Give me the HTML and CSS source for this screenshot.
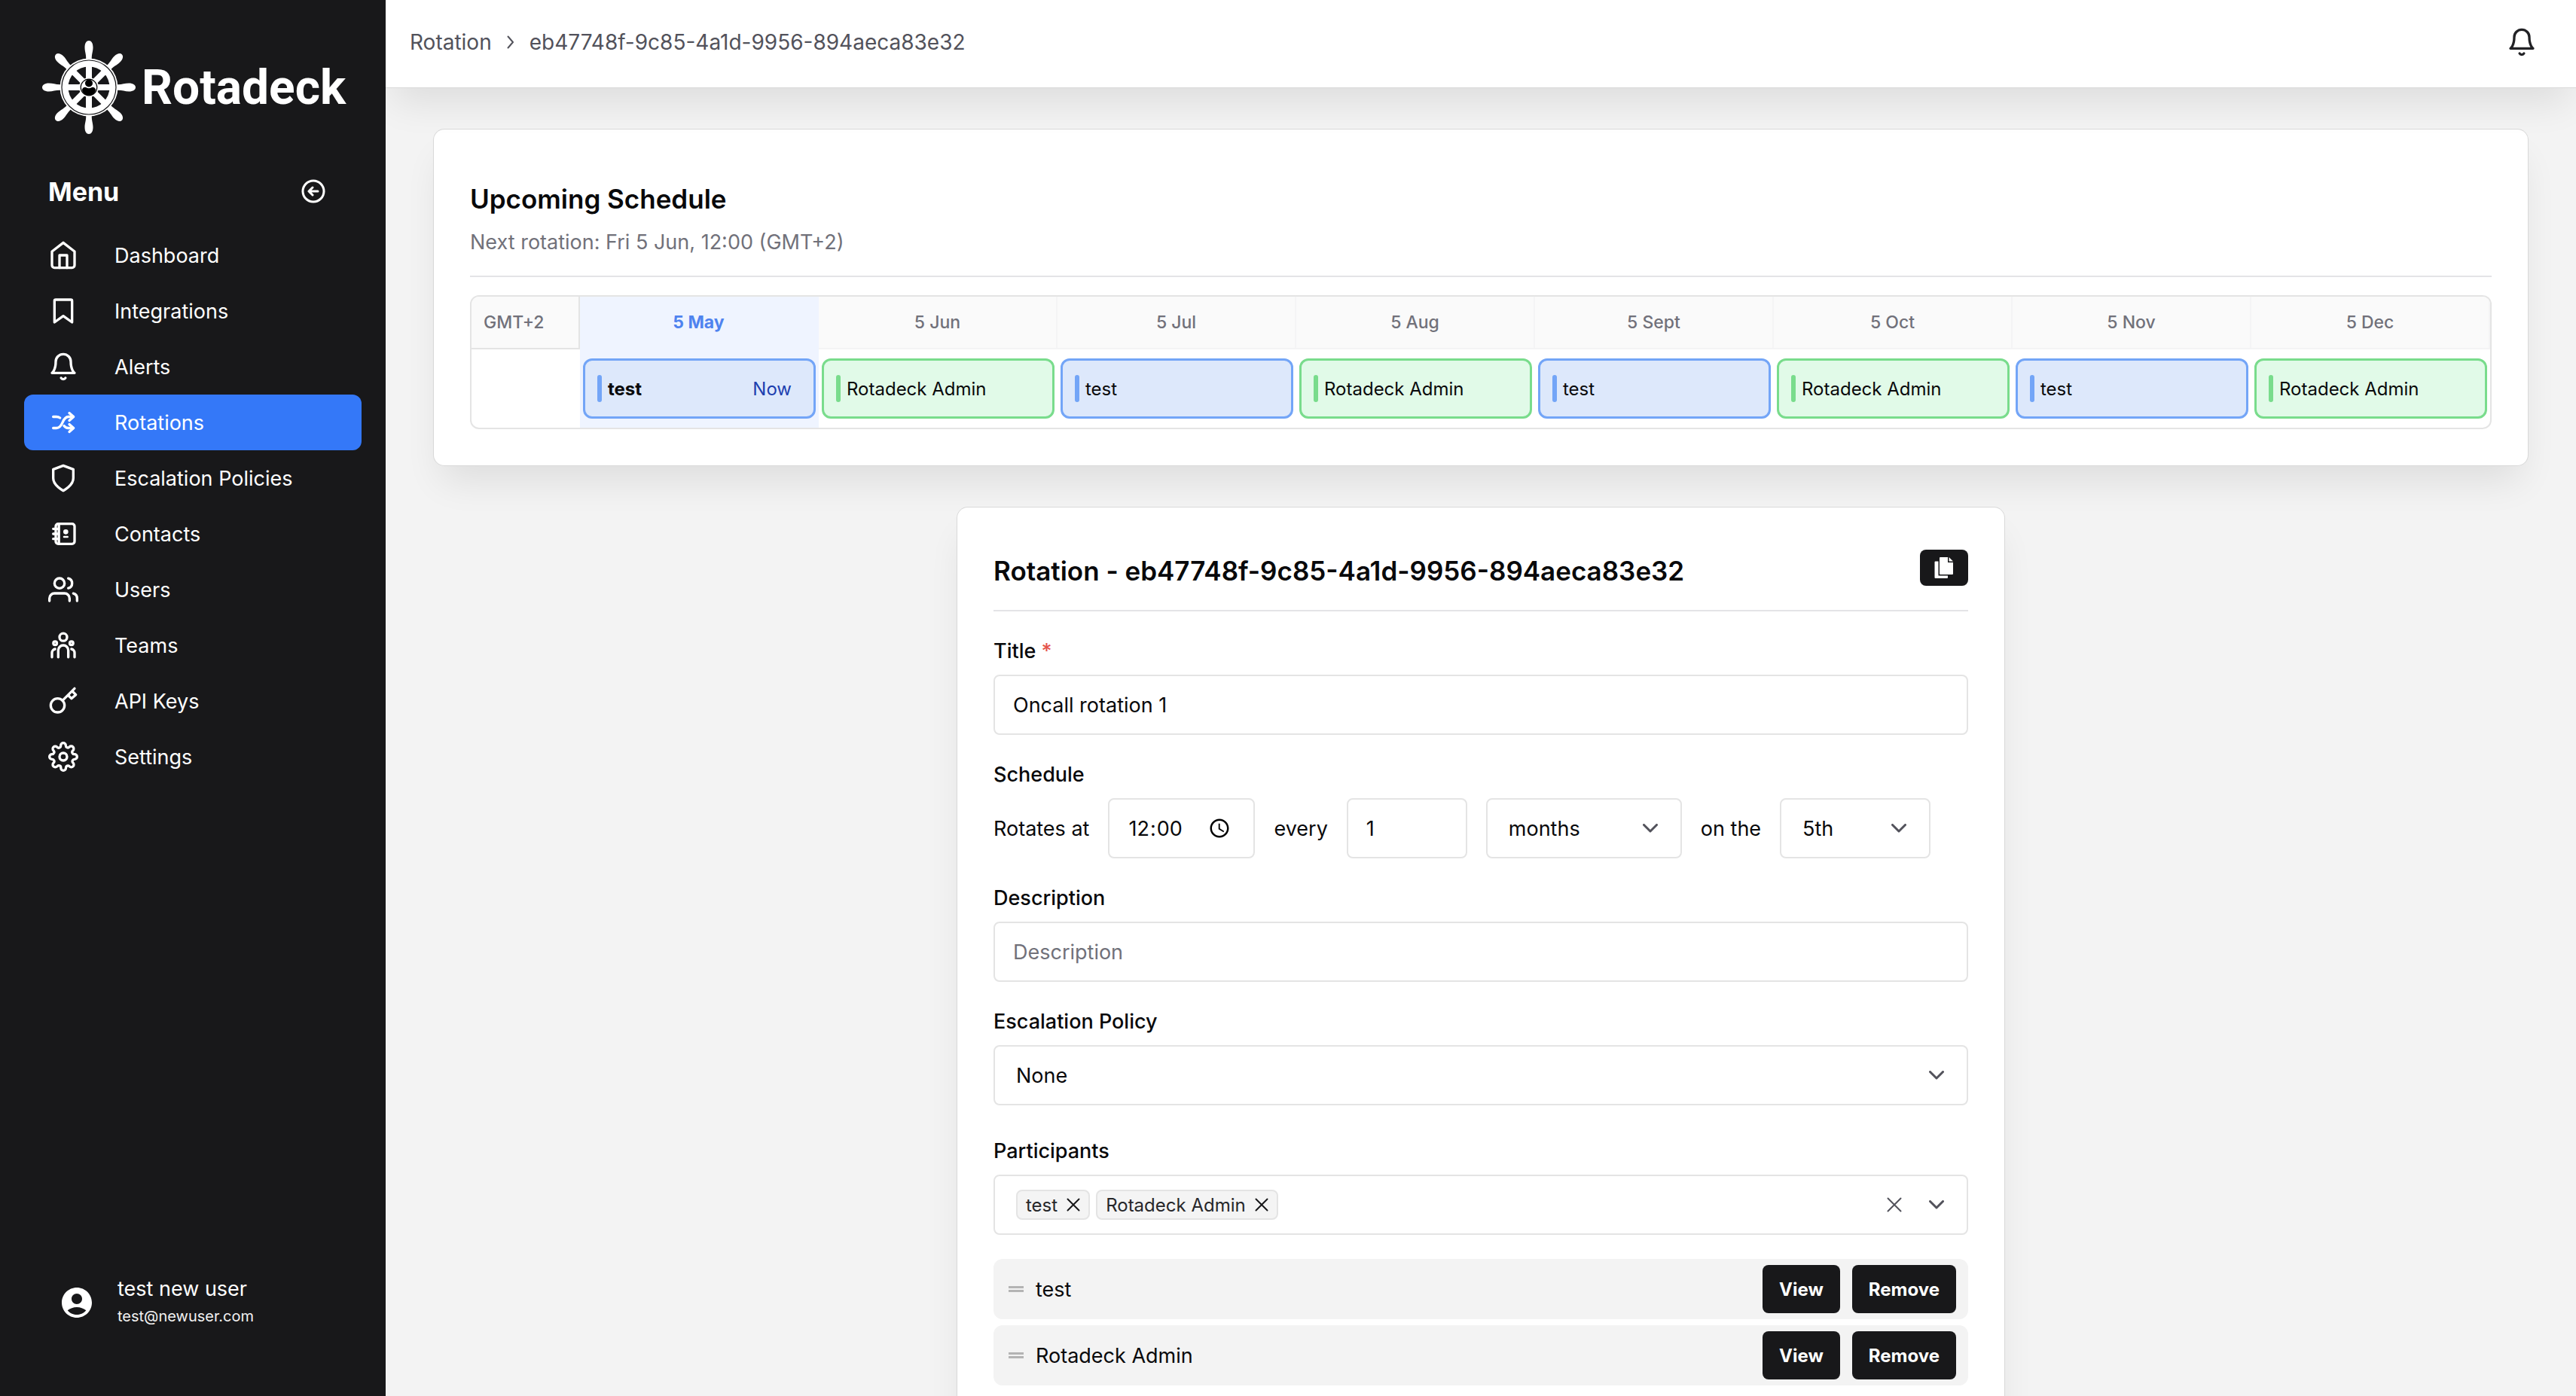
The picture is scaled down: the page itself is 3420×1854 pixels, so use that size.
FILE: index.html
```html
<!DOCTYPE html>
<html lang="en">
<head>
    <meta charset="UTF-8">
    <meta name="viewport" content="width=device-width, initial-scale=1.0">
    <title>Rotadeck - Rotation</title>
    <link rel="stylesheet" href="styles.css">
</head>
<body>
    <aside class="sidebar">
        <div class="brand">
            <svg class="brand-wheel" viewBox="0 0 124 124" aria-hidden="true">
                <defs>
                    <path id="handle" d="M58 27C59 19 56.500 15 56.500 9C56.500 3 59 0 62 0S67.500 3 67.500 9C67.500 15 65 19 66 27z"/>
                </defs>
                <g fill="#fff">
                    <use href="#handle"/>
                    <use href="#handle" transform="rotate(45 62 62)"/>
                    <use href="#handle" transform="rotate(90 62 62)"/>
                    <use href="#handle" transform="rotate(135 62 62)"/>
                    <use href="#handle" transform="rotate(180 62 62)"/>
                    <use href="#handle" transform="rotate(225 62 62)"/>
                    <use href="#handle" transform="rotate(270 62 62)"/>
                    <use href="#handle" transform="rotate(315 62 62)"/>
                    <circle cx="62" cy="62" r="38.500"/>
                </g>
                <circle cx="62" cy="62" r="36" fill="none" stroke="#18181a" stroke-width="1.200"/>
                <circle cx="62" cy="62" r="27.500" fill="#18181a"/>
                <path d="M62 33v58M33 62h58M41.500 41.500l41 41M82.500 41.500l-41 41" stroke="#fff" stroke-width="8"/>
                <circle cx="62" cy="62" r="13" fill="#fff"/>
                <circle cx="62" cy="62" r="10.800" fill="#fff" stroke="#000" stroke-width="1.200"/>
                <circle cx="62" cy="56.500" r="5" fill="#000"/>
                <path d="M53 65c1-3 4-4 6-2.500q3 1.500 6 0c2-1.500 5-.5 6 2.500c0 4-4 7.500-9 7.500s-9-3.500-9-7.500z" fill="#000"/>
            </svg>
            <span class="brand-name">Rotadeck</span>
        </div>

        <div class="menu-head">
            <h2>Menu</h2>
            <button class="icon-button" aria-label="Collapse menu">
                <svg class="icon-collapse" viewBox="0 0 32 32"><circle cx="16" cy="16" r="14"/><path d="M22 16H10.500M15 11l-5 5 5 5"/></svg>
            </button>
        </div>

        <nav class="nav">
            <a class="nav-link" href="#">
                <svg class="icon" viewBox="0 0 24 24"><path d="M3 9l9-7 9 7v11a2 2 0 0 1-2 2H5a2 2 0 0 1-2-2z"/><path d="M9 22V12h6v10"/></svg>
                Dashboard
            </a>
            <a class="nav-link" href="#">
                <svg class="icon" viewBox="0 0 24 24"><path d="M19 21l-7-5-7 5V4a1 1 0 0 1 1-1h12a1 1 0 0 1 1 1z"/></svg>
                Integrations
            </a>
            <a class="nav-link" href="#">
                <svg class="icon" viewBox="0 0 24 24"><path d="M18 8A6 6 0 0 0 6 8c0 7-3 9-3 9h18s-3-2-3-9"/><path d="M13.730 21a2 2 0 0 1-3.460 0"/></svg>
                Alerts
            </a>
            <a class="nav-link active" href="#">
                <svg class="icon" viewBox="0 0 24 24"><path d="M4 16.500h2.500c2.700 0 3.900-2 4.900-4.400C12.400 9.700 13.500 7.500 16 7.500h4"/><path d="M4 7.500h2.500c1.200 0 2.100.3 2.900.9"/><path d="M12.600 14.700c.9 1.200 2 1.800 3.400 1.800h4"/><path d="M16.800 4.500l3.400 3-3.400 3M16.800 13.500l3.400 3-3.400 3"/></svg>
                Rotations
            </a>
            <a class="nav-link" href="#">
                <svg class="icon" viewBox="0 0 24 24"><path d="M12 22s8-4 8-10V5l-8-3-8 3v7c0 6 8 10 8 10z"/></svg>
                Escalation Policies
            </a>
            <a class="nav-link" href="#">
                <svg class="icon" viewBox="0 0 24 24"><rect x="6" y="4" width="15" height="16" rx="2"/><path d="M8.500 4v16M4 8h4M4 12h4M4 16h4"/><circle cx="14" cy="10.400" r="1"/><path d="M12.600 14.400h2.800" stroke-width="1.500"/></svg>
                Contacts
            </a>
            <a class="nav-link" href="#">
                <svg class="icon" viewBox="0 0 24 24"><path d="M17 21v-2a4 4 0 0 0-4-4H5a4 4 0 0 0-4 4v2"/><circle cx="9" cy="7" r="4"/><path d="M23 21v-2a4 4 0 0 0-3-3.870M16 3.130a4 4 0 0 1 0 7.750"/></svg>
                Users
            </a>
            <a class="nav-link" href="#">
                <svg class="icon" viewBox="0 0 24 24"><circle cx="12" cy="5.500" r="3"/><circle cx="5.500" cy="10.300" r="1.400"/><circle cx="18.500" cy="10.300" r="1.400"/><path d="M8 21.500V16a4 4 0 0 1 8 0v5.500M3 21.500V18a3 3 0 0 1 2.500-3M21 21.500V18a3 3 0 0 0-2.500-3"/></svg>
                Teams
            </a>
            <a class="nav-link" href="#">
                <svg class="icon" viewBox="0 0 24 24"><path d="M21 2l-9.610 9.610"/><circle cx="7.500" cy="15.500" r="5.500"/><path d="M16 7.500l2.500 2.500L22 7l-2.500-2.500"/></svg>
                API Keys
            </a>
            <a class="nav-link" href="#">
                <svg class="icon" viewBox="0 0 24 24"><circle cx="12" cy="12" r="3"/><path d="M19.400 15a1.650 1.650 0 0 0 .33 1.820l.06.06a2 2 0 0 1-2.830 2.830l-.06-.06a1.650 1.650 0 0 0-2.820 1.170V21a2 2 0 0 1-4 0v-.09A1.650 1.650 0 0 0 7.100 19.700l-.06.06a2 2 0 0 1-2.830-2.830l.06-.06A1.650 1.650 0 0 0 3.090 14H3a2 2 0 0 1 0-4h.09A1.650 1.650 0 0 0 4.270 7.180l-.06-.06a2 2 0 0 1 2.830-2.830l.06.06A1.650 1.650 0 0 0 10 3.090V3a2 2 0 0 1 4 0v.09a1.650 1.650 0 0 0 2.820 1.180l.06-.06a2 2 0 0 1 2.830 2.830l-.06.06A1.650 1.650 0 0 0 20.910 10H21a2 2 0 0 1 0 4h-.09a1.650 1.650 0 0 0-1.510 1z"/></svg>
                Settings
            </a>
        </nav>

        <div class="account">
            <svg class="avatar" viewBox="0 0 24 24" aria-hidden="true"><path d="M12 2C6.480 2 2 6.480 2 12s4.480 10 10 10 10-4.480 10-10S17.520 2 12 2zm0 4c1.930 0 3.500 1.570 3.500 3.500S13.930 13 12 13s-3.500-1.570-3.500-3.500S10.070 6 12 6zm0 14c-2.030 0-4.430-.82-6.140-2.880C7.550 15.800 9.680 15 12 15s4.450.8 6.140 2.120C16.430 19.180 14.030 20 12 20z"/></svg>
            <div>
                <div class="account-name">test new user</div>
                <div class="account-email">test@newuser.com</div>
            </div>
        </div>
    </aside>

    <div class="page">
        <header class="topbar">
            <nav class="breadcrumb">
                <a href="#">Rotation</a>
                <svg class="crumb-arrow" viewBox="0 0 10 18" aria-hidden="true"><path d="M1.500 1.500L8 9l-6.500 7.500"/></svg>
                <a href="#">eb47748f-9c85-4a1d-9956-894aeca83e32</a>
            </nav>
            <button class="icon-button" aria-label="Notifications">
                <svg class="icon" viewBox="0 0 24 24"><path d="M18 8A6 6 0 0 0 6 8c0 7-3 9-3 9h18s-3-2-3-9"/><path d="M13.730 21a2 2 0 0 1-3.460 0"/></svg>
            </button>
        </header>

        <main class="content">
            <section class="card">
                <div class="schedule-head">
                    <h1>Upcoming Schedule</h1>
                    <p>Next rotation: Fri 5 Jun, 12:00 (GMT+2)</p>
                </div>
                <div class="schedule">
                    <table>
                        <thead>
                            <tr>
                                <th class="zone">GMT+2</th>
                                <th class="current">5 May</th>
                                <th>5 Jun</th>
                                <th>5 Jul</th>
                                <th>5 Aug</th>
                                <th>5 Sept</th>
                                <th>5 Oct</th>
                                <th>5 Nov</th>
                                <th>5 Dec</th>
                            </tr>
                        </thead>
                        <tbody>
                            <tr>
                                <td></td>
                                <td class="current"><div class="shift blue"><b>test</b><span class="now">Now</span></div></td>
                                <td><div class="shift green">Rotadeck Admin</div></td>
                                <td><div class="shift blue">test</div></td>
                                <td><div class="shift green">Rotadeck Admin</div></td>
                                <td><div class="shift blue">test</div></td>
                                <td><div class="shift green">Rotadeck Admin</div></td>
                                <td><div class="shift blue">test</div></td>
                                <td><div class="shift green">Rotadeck Admin</div></td>
                            </tr>
                        </tbody>
                    </table>
                </div>
            </section>

            <section class="card card-narrow">
                <div class="rotation-head">
                    <h1>Rotation - eb47748f-9c85-4a1d-9956-894aeca83e32</h1>
                    <button class="copy-button" aria-label="Copy">
                        <svg viewBox="0 0 26 28" aria-hidden="true"><path d="M8 0h10v7h7v15a1 1 0 0 1-1 1H8a1 1 0 0 1-1-1V1a1 1 0 0 1 1-1z"/><path d="M19.500 0L25 5.500h-5.500z"/><path d="M1.500 5.500h4V24.500h12.500V27a1 1 0 0 1-1 1H1.500a1 1 0 0 1-1-1V6.500a1 1 0 0 1 1-1z"/></svg>
                    </button>
                </div>

                <form class="rotation-form">
                    <div class="field">
                        <label for="title">Title <span class="required">*</span></label>
                        <input class="control" type="text" id="title" value="Oncall rotation 1">
                    </div>

                    <div class="field">
                        <label for="time">Schedule</label>
                        <div class="schedule-row">
                            <span>Rotates at</span>
                            <input class="control time" type="time" id="time" value="12:00">
                            <label class="inline" for="count">every</label>
                            <input class="control count" type="text" inputmode="numeric" id="count" value="1">
                            <div class="select-wrap unit">
                                <select class="control" aria-label="Unit">
                                    <option>months</option>
                                </select>
                                <svg class="chevron" viewBox="0 0 20 12" aria-hidden="true"><path d="M1.500 1.500L10 10l8.500-8.500"/></svg>
                            </div>
                            <label class="inline" for="day">on the</label>
                            <div class="select-wrap day">
                                <select class="control" id="day">
                                    <option>5th</option>
                                </select>
                                <svg class="chevron" viewBox="0 0 20 12" aria-hidden="true"><path d="M1.500 1.500L10 10l8.500-8.500"/></svg>
                            </div>
                        </div>
                    </div>

                    <div class="field">
                        <label for="description">Description</label>
                        <input class="control" type="text" id="description" placeholder="Description">
                    </div>

                    <div class="field">
                        <label for="policy">Escalation Policy</label>
                        <div class="select-wrap">
                            <select class="control" id="policy">
                                <option>None</option>
                            </select>
                            <svg class="chevron" viewBox="0 0 20 12" aria-hidden="true"><path d="M1.500 1.500L10 10l8.500-8.500"/></svg>
                        </div>
                    </div>

                    <div class="field participants">
                        <label for="people">Participants</label>
                        <div class="control combo">
                            <span class="chip">test
                                <button type="button" aria-label="Remove test"><svg viewBox="0 0 18 18"><path d="M1.500 1.500l15 15M16.500 1.500l-15 15"/></svg></button>
                            </span>
                            <span class="chip">Rotadeck Admin
                                <button type="button" aria-label="Remove Rotadeck Admin"><svg viewBox="0 0 18 18"><path d="M1.500 1.500l15 15M16.500 1.500l-15 15"/></svg></button>
                            </span>
                            <input class="combo-input" type="text" id="people">
                            <button class="combo-clear" type="button" aria-label="Clear all"><svg viewBox="0 0 20 20"><path d="M1.500 1.500l17 17M18.500 1.500l-17 17"/></svg></button>
                            <button class="combo-open" type="button" aria-label="Open list"><svg viewBox="0 0 20 12"><path d="M1.500 1.500L10 10l8.500-8.500"/></svg></button>
                        </div>
                    </div>

                    <ul class="people-list">
                        <li>
                            <span class="grip"></span>
                            <span class="person">test</span>
                            <button class="button" type="button">View</button>
                            <button class="button" type="button">Remove</button>
                        </li>
                        <li>
                            <span class="grip"></span>
                            <span class="person">Rotadeck Admin</span>
                            <button class="button" type="button">View</button>
                            <button class="button" type="button">Remove</button>
                        </li>
                    </ul>
                </form>
            </section>
        </main>
    </div>
</body>
</html>
```
FILE: styles.css
```css
* {
    box-sizing: border-box;
}
body {
    font-family: Inter, "Liberation Sans", sans-serif;
    font-size: 27px;
    color: #09090b;
    background-color: #f3f3f3;
    margin: 0;
    height: 100vh;
    display: flex;
    overflow: hidden;
}
h1, h2, p, ul {
    margin: 0;
    padding: 0;
}
a {
    color: inherit;
    text-decoration: none;
}
button, input, select {
    font: inherit;
    color: inherit;
}
button {
    padding: 0;
    border: none;
    background: none;
    cursor: pointer;
}
svg {
    display: block;
    flex-shrink: 0;
    fill: none;
    stroke: currentColor;
    stroke-width: 2;
    stroke-linecap: round;
    stroke-linejoin: round;
}
.icon {
    width: 40px;
    height: 40px;
}

/* Sidebar */
.sidebar {
    width: 512px;
    flex-shrink: 0;
    background-color: #18181a;
    color: white;
    padding: 54px 32px 88px;
    display: flex;
    flex-direction: column;
    position: relative;
    z-index: 2;
}
.brand {
    display: flex;
    align-items: center;
    gap: 8px;
    padding-left: 24px;
}
.brand-wheel {
    width: 124px;
    height: 124px;
    stroke: none;
}
.brand-name {
    font-family: Roboto, sans-serif;
    font-size: 64px;
    font-weight: 700;
}
.menu-head {
    display: flex;
    align-items: center;
    justify-content: space-between;
    height: 48px;
    margin: 52px 0 24px;
    padding: 0 48px 0 32px;
}
.menu-head h2 {
    font-size: 34px;
    font-weight: 700;
}
.icon-collapse {
    width: 32px;
    height: 32px;
    stroke-width: 3;
}
.nav {
    flex: 1;
}
.nav-link {
    display: flex;
    align-items: center;
    gap: 48px;
    height: 74px;
    padding-left: 32px;
    border-radius: 12px;
}
.nav-link.active {
    background-color: #3478f8;
}
.account {
    display: flex;
    align-items: center;
    gap: 30px;
    padding-left: 46px;
    line-height: 36px;
}
.avatar {
    width: 48px;
    height: 48px;
    fill: white;
    stroke: none;
}
.account-email {
    font-size: 20px;
    color: #f1f1f1;
}

/* Top bar */
.page {
    flex: 1;
    min-width: 0;
    display: flex;
    flex-direction: column;
}
.topbar {
    height: 116px;
    flex-shrink: 0;
    background-color: white;
    display: flex;
    align-items: center;
    justify-content: space-between;
    padding: 0 52px 4px 32px;
    position: relative;
    z-index: 1;
    box-shadow: 0 0 0 1px #d9d9d9, 0 30px 50px -10px rgba(0, 0, 0, 0.09);
}
.breadcrumb {
    display: flex;
    align-items: center;
    gap: 20px;
    font-size: 28px;
    color: #52525b;
}
.crumb-arrow {
    width: 10px;
    height: 18px;
}
.topbar .icon {
    color: #222225;
}

/* Cards */
.content {
    flex: 1;
    min-height: 0;
    overflow-y: auto;
    scrollbar-width: none;
    padding: 56px 64px;
}
.card {
    background-color: white;
    border-radius: 14px;
    padding: 48px;
    box-shadow: 0 0 0 1px #d9d9d9, 0 30px 50px -10px rgba(0, 0, 0, 0.09);
}
.card-narrow {
    width: 50%;
    margin: 56px auto 0;
}
.card h1 {
    font-size: 35px;
    font-weight: 600;
    line-height: 56px;
}
.schedule-head {
    padding: 16px 0 26px;
    margin-bottom: 24px;
    border-bottom: 2px solid #e4e4e7;
}
.schedule-head p {
    margin-top: 12px;
    line-height: 36px;
    color: #71717a;
}

/* Schedule table */
.schedule {
    border: 2px solid #e4e4e4;
    border-radius: 12px;
    overflow: hidden;
}
.schedule table {
    width: 100%;
    table-layout: fixed;
    border-spacing: 0;
}
.schedule th {
    height: 70px;
    padding: 0;
    font-size: 23px;
    font-weight: 500;
    color: #71717a;
    background-color: #fafafa;
    border-right: 2px solid #f4f4f5;
    border-bottom: 2px solid #f4f4f5;
}
.schedule th.zone {
    width: 144px;
    padding-left: 16px;
    text-align: left;
    border-color: #e4e4e4;
}
.schedule th.current {
    font-weight: 700;
    color: #4f83ef;
    border-color: #eff4ff;
}
.schedule .current {
    background-color: #eff4ff;
}
.schedule td {
    padding: 12px 4px;
}
.shift {
    display: flex;
    align-items: center;
    height: 80px;
    padding: 0 29px 0 16px;
    border: 3px solid;
    border-radius: 12px;
    font-size: 24px;
}
.shift::before {
    content: "";
    width: 6px;
    height: 36px;
    margin-right: 8px;
    border-radius: 3px;
}
.shift.blue {
    background-color: #dde8fb;
    border-color: #73a5f7;
}
.shift.blue::before {
    background-color: #73a5f7;
}
.shift.green {
    background-color: #e1fae8;
    border-color: #79dc8c;
}
.shift.green::before {
    background-color: #79dc8c;
}
.now {
    margin-left: auto;
    color: #1e40af;
}

/* Rotation form */
.rotation-head {
    display: flex;
    align-items: flex-start;
    justify-content: space-between;
    padding: 8px 0 24px;
    border-bottom: 2px solid #e4e4e7;
}
.copy-button {
    width: 64px;
    height: 48px;
    border-radius: 8px;
    background-color: #18181a;
    display: flex;
    align-items: center;
    justify-content: center;
}
.copy-button svg {
    width: 26px;
    height: 28px;
    fill: white;
    stroke: none;
}
.rotation-form {
    padding-top: 34px;
}
.field {
    margin-bottom: 34px;
}
.field > label {
    display: block;
    margin-bottom: 12px;
    line-height: 38px;
    font-weight: 500;
}
.required {
    color: #e5534b;
}
.control {
    width: 100%;
    height: 80px;
    padding: 0 24px;
    background-color: white;
    border: 2px solid #e4e4e4;
    border-radius: 8px;
    outline: none;
}
.control::placeholder {
    color: #71717a;
}
.schedule-row {
    display: flex;
    align-items: center;
    gap: 25px;
}
.time {
    width: 195px;
    padding: 0 30px 0 24px;
}
.time::-webkit-datetime-edit-ampm-field {
    display: none;
}
.time::-webkit-calendar-picker-indicator {
    width: 30px;
    height: 30px;
    padding: 0;
    margin: 0;
}
.count {
    width: 160px;
}
.select-wrap {
    position: relative;
}
.select-wrap select {
    appearance: none;
    padding: 0 64px 0 28px;
}
.unit {
    width: 260px;
}
.day {
    width: 200px;
}
.chevron {
    position: absolute;
    right: 32px;
    top: 34px;
    width: 20px;
    height: 12px;
    color: #52525b;
    stroke-width: 3;
    pointer-events: none;
}
.participants {
    margin: 42px 0 32px;
}
.combo {
    display: flex;
    align-items: center;
    gap: 8px;
    padding: 0 30px 0 28px;
    color: #52525b;
}
.chip {
    display: flex;
    align-items: center;
    gap: 12px;
    height: 40px;
    padding: 0 11px;
    font-size: 24px;
    color: #27272a;
    background-color: #f4f4f4;
    border: 2px solid #e4e4e4;
    border-radius: 8px;
}
.chip svg {
    width: 18px;
    height: 18px;
    color: #18181a;
}
.combo-input {
    flex: 1;
    min-width: 0;
    border: none;
    outline: none;
    background: none;
}
.combo-clear svg {
    width: 20px;
    height: 20px;
}
.combo-open {
    margin-left: 28px;
}
.combo-open svg {
    width: 20px;
    height: 12px;
    stroke-width: 3;
}
.people-list {
    list-style: none;
    display: flex;
    flex-direction: column;
    gap: 8px;
    padding-bottom: 96px;
}
.people-list li {
    display: flex;
    align-items: center;
    gap: 16px;
    height: 80px;
    padding: 0 16px 0 20px;
    background-color: #f3f3f3;
    border-radius: 12px;
}
.grip {
    width: 20px;
    height: 8px;
    border-top: 3px solid #b4b4b4;
    border-bottom: 3px solid #b4b4b4;
}
.person {
    flex: 1;
}
.button {
    height: 64px;
    padding: 0 22px;
    border-radius: 8px;
    background-color: #18181a;
    color: white;
    font-size: 24px;
    font-weight: 700;
}
```
